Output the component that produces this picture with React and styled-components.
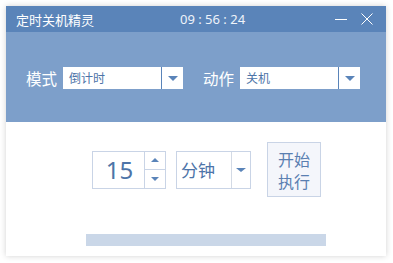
import React from 'react';
import styled, { createGlobalStyle } from 'styled-components';

const GlobalStyle = createGlobalStyle`
  html, body {
    margin: 0;
    padding: 0;
    background: #ffffff;
  }
  body {
    padding: 6px;
    font-family: "Noto Sans CJK SC", "Noto Sans", sans-serif;
  }
`;

const Window = styled.div`
  width: 380px;
  height: 250px;
  display: flex;
  flex-direction: column;
  background: #ffffff;
  box-shadow: 0 0 6px rgba(0, 0, 0, 0.18);
`;

const TitleBar = styled.div`
  height: 26px;
  display: flex;
  align-items: center;
  background: #5a84b9;
  color: #ffffff;
  padding: 0 6px 0 10px;
  position: relative;
`;

const Title = styled.div`
  font-size: 13px;
  flex: 1;
`;

const Clock = styled.div`
  position: absolute;
  left: 174px;
  top: 0;
  line-height: 26px;
  font-family: "Noto Sans", "DejaVu Sans", sans-serif;
  font-size: 13px;
  color: #eef3fa;
  white-space: pre;
`;

const WinButton = styled.div`
  width: 26px;
  height: 26px;
  display: flex;
  align-items: center;
  justify-content: center;
`;

const Panel = styled.div`
  height: 90px;
  background: #7d9fca;
  display: flex;
  align-items: center;
  padding: 2px 0 0 20px;
  box-sizing: border-box;
`;

const Label = styled.div`
  font-size: 15.5px;
  color: #ffffff;
  margin-right: 6px;
  margin-left: ${(p) => p.$gap || 0}px;
`;

const Select = styled.div`
  width: 120px;
  height: 22px;
  display: flex;
  background: #ffffff;
`;

const SelectText = styled.div`
  flex: 1;
  font-size: 12px;
  line-height: 22px;
  padding-left: 6px;
  color: #4d74a8;
  border-right: 1px solid #5a84b9;
`;

const ArrowBox = styled.div`
  width: ${(p) => p.$w}px;
  display: flex;
  align-items: center;
  justify-content: center;
`;

const Tri = styled.div`
  width: 0;
  height: 0;
  border-left: ${(p) => p.$s}px solid transparent;
  border-right: ${(p) => p.$s}px solid transparent;
  ${(p) => (p.$up ? 'border-bottom' : 'border-top')}: ${(p) => p.$h}px solid #5a84b9;
`;

const Body = styled.div`
  flex: 1;
  display: flex;
  flex-direction: column;
  padding: 20px 0 0 80px;
`;

const Controls = styled.div`
  display: flex;
  align-items: center;
  padding-left: 6px;
`;

const Spin = styled.div`
  width: 74px;
  height: 38px;
  box-sizing: border-box;
  border: 1px solid #c9d4e6;
  display: flex;
`;

const SpinValue = styled.div`
  flex: 1;
  border-right: 1px solid #c9d4e6;
  font-family: "Noto Sans", "DejaVu Sans", sans-serif;
  font-size: 24px;
  line-height: 36px;
  color: #4d74a8;
  text-align: center;
  padding-left: 2px;
`;

const SpinButtons = styled.div`
  width: 20px;
  display: flex;
  flex-direction: column;
`;

const SpinButton = styled.div`
  flex: 1;
  display: flex;
  align-items: center;
  justify-content: center;
  & + & {
    border-top: 1px solid #c9d4e6;
  }
`;

const Unit = styled.div`
  width: 75px;
  height: 38px;
  margin-left: 10px;
  box-sizing: border-box;
  border: 1px solid #c9d4e6;
  display: flex;
`;

const UnitText = styled.div`
  flex: 1;
  font-size: 17px;
  line-height: 36px;
  padding-left: 4px;
  color: #4d74a8;
  border-right: 1px solid #d3dae5;
`;

const StartButton = styled.div`
  width: 54px;
  height: 55px;
  margin-left: 16px;
  box-sizing: border-box;
  border: 1px solid #c9d4e6;
  background: #f4f6fb;
  color: #5a7fb1;
  font-size: 16px;
  line-height: 22px;
  text-align: center;
  display: flex;
  align-items: center;
  justify-content: center;
`;

const Progress = styled.div`
  width: 240px;
  height: 12px;
  margin-top: 37px;
  background: #cad7e8;
`;

export default function App() {
  return (
    <>
      <GlobalStyle />
      <Window>
        <TitleBar>
          <Title>定时关机精灵</Title>
          <Clock>09 : 56 : 24</Clock>
          <WinButton>
            <svg width="12" height="12" viewBox="0 0 12 12">
              <line x1="0" y1="6.5" x2="12" y2="6.5" stroke="#fff" strokeWidth="1" />
            </svg>
          </WinButton>
          <WinButton>
            <svg width="12" height="12" viewBox="0 0 12 12">
              <path d="M0.5 0.5 L11.5 11.5 M11.5 0.5 L0.5 11.5" stroke="#fff" strokeWidth="1" />
            </svg>
          </WinButton>
        </TitleBar>
        <Panel>
          <Label>模式</Label>
          <Select>
            <SelectText>倒计时</SelectText>
            <ArrowBox $w={21}><Tri $s={5} $h={5} /></ArrowBox>
          </Select>
          <Label $gap={20}>动作</Label>
          <Select>
            <SelectText>关机</SelectText>
            <ArrowBox $w={21}><Tri $s={5} $h={5} /></ArrowBox>
          </Select>
        </Panel>
        <Body>
          <Controls>
            <Spin>
              <SpinValue>15</SpinValue>
              <SpinButtons>
                <SpinButton><Tri $s={4.5} $h={4} $up /></SpinButton>
                <SpinButton><Tri $s={4.5} $h={4} /></SpinButton>
              </SpinButtons>
            </Spin>
            <Unit>
              <UnitText>分钟</UnitText>
              <ArrowBox $w={18}><Tri $s={5} $h={4} /></ArrowBox>
            </Unit>
            <StartButton>开始<br />执行</StartButton>
          </Controls>
          <Progress />
        </Body>
      </Window>
    </>
  );
}
